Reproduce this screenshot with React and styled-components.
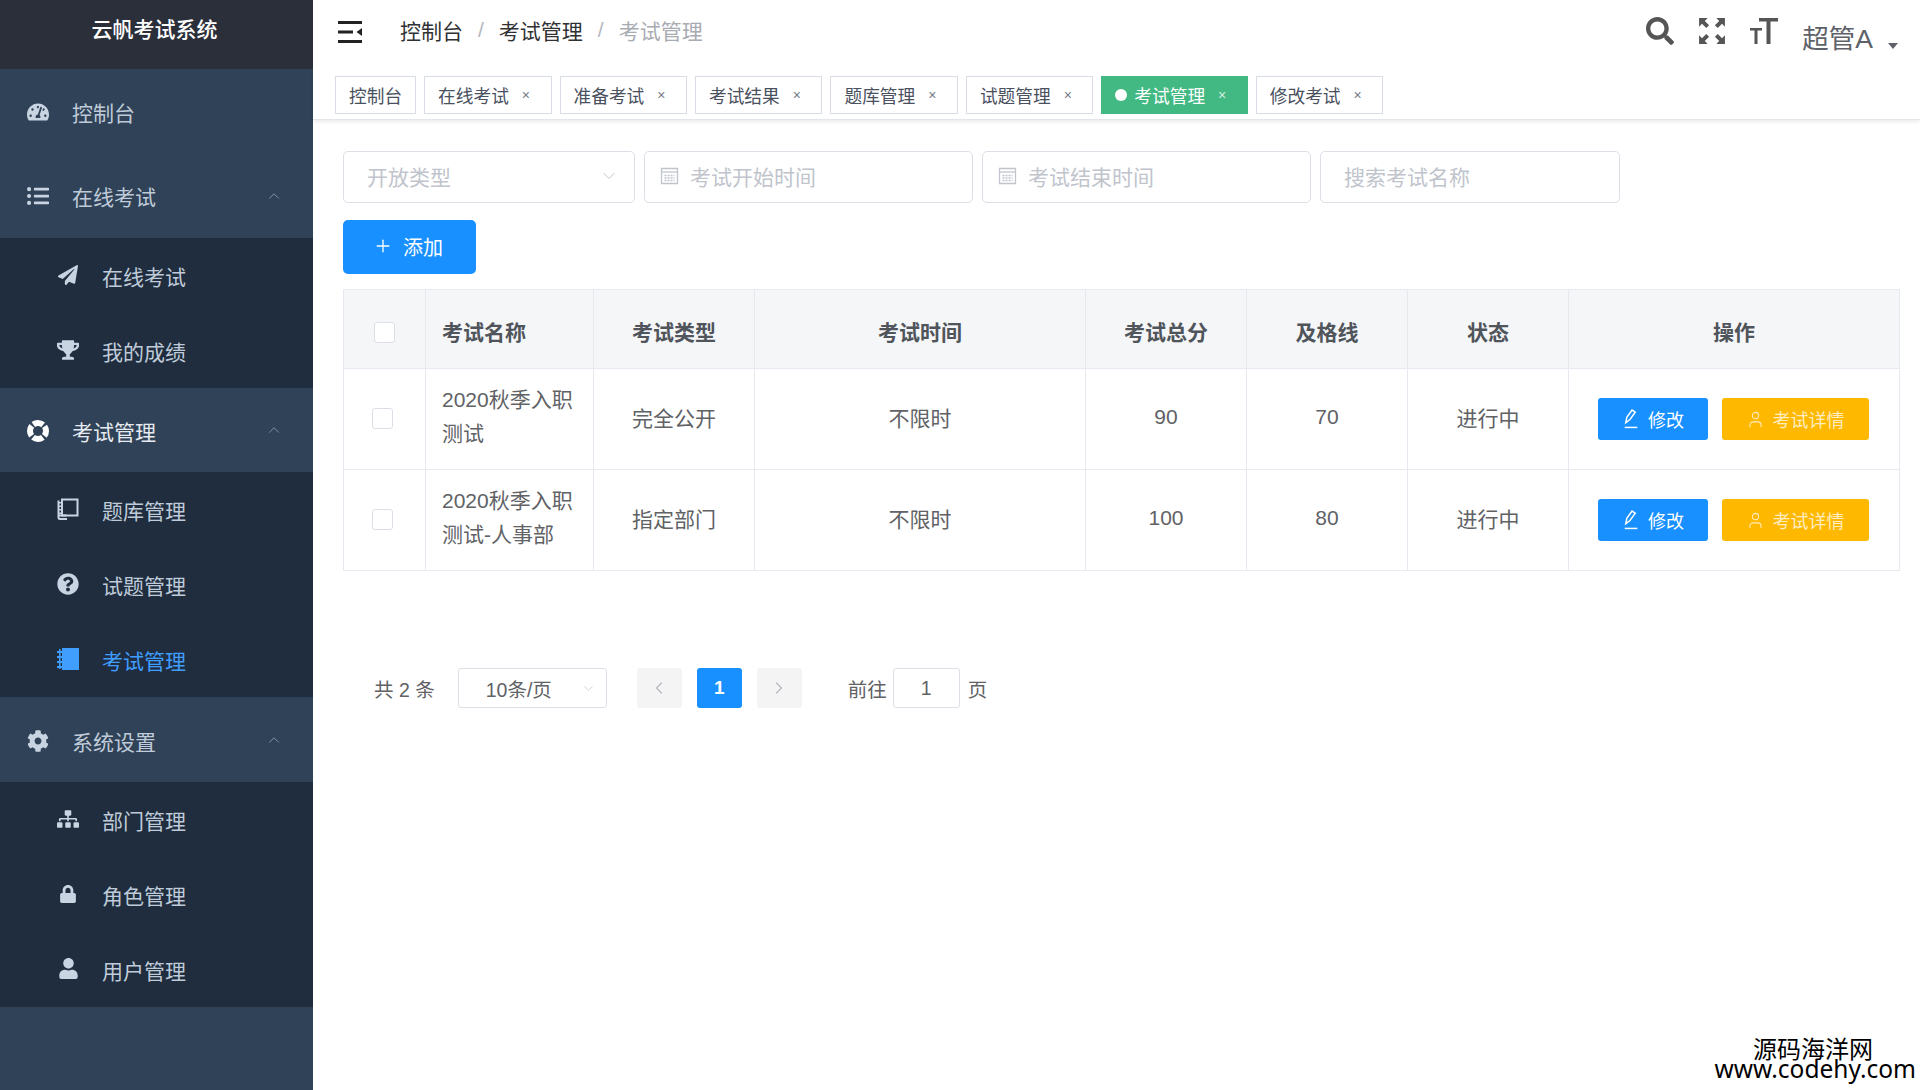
import React from "react";
import styled, { createGlobalStyle } from "styled-components";
import {
    FaTachometerAlt, FaListUl, FaPaperPlane, FaTrophy, FaQuestionCircle,
    FaCog, FaSitemap, FaLock, FaUser, FaSearch
} from "react-icons/fa";
import { ChevronUp, ChevronDown, ChevronLeft, ChevronRight, Plus, User } from "lucide-react";

const GlobalStyle = createGlobalStyle`
    html, body {
        margin: 0;
        padding: 0;
        height: 1090px;
        overflow: hidden;
        background: #fff;
        font-family: "Liberation Sans", "Noto Sans CJK SC", sans-serif;
        color: #606266;
    }
    * {
        box-sizing: border-box;
    }
`;

const Page = styled.div`
    position: relative;
    display: flex;
    width: 1920px;
    height: 1090px;
    overflow: hidden;
`;

/* sidebar */
const Sidebar = styled.aside`
    flex: 0 0 313px;
    height: 100%;
    background: #304257;
`;

const Logo = styled.div`
    display: flex;
    align-items: center;
    justify-content: center;
    height: 68.5px;
    padding: 0 4px 13px 0;
    background: #2b2f3a;
    color: #fff;
    font-size: 21px;
    font-weight: 500;
`;

const RootItem = styled.div`
    display: flex;
    align-items: center;
    height: 84.6px;
    padding: 2px 30px 0 27px;
    color: ${props => (props.$open ? "#e6ebf1" : "#bfcbd9")};
    font-size: 21px;

    .icon {
        display: flex;
        justify-content: center;
        width: 22px;
        margin-right: 23px;
        color: ${props => (props.$open ? "#fff" : "#c9d4e2")};
    }

    .arrow {
        margin-left: auto;
        margin-top: -1px;
        color: #8c99a9;
    }
`;

const SubList = styled.div`
    background: #1f2d3f;
`;

const SubItem = styled.div`
    display: flex;
    align-items: center;
    height: 75px;
    padding: 1px 0 0 57px;
    color: ${props => (props.$active ? "#409eff" : "#bfcbd9")};
    font-size: 21px;

    .icon {
        display: flex;
        justify-content: center;
        width: 22px;
        margin-right: 23px;
        margin-top: -2px;
        color: ${props => (props.$active ? "#409eff" : "#c9d4e2")};
    }
`;

/* main */
const Main = styled.main`
    flex: 1;
    min-width: 0;
    display: flex;
    flex-direction: column;
`;

const Navbar = styled.header`
    display: flex;
    align-items: center;
    height: 70px;
    padding: 0 22px 6px 25px;
    flex: none;
`;

const Breadcrumb = styled.nav`
    display: flex;
    align-items: center;
    margin-left: 37px;
    margin-top: -4px;
    font-size: 21px;
    color: #303133;

    .sep {
        margin: 0 15px;
        color: #b4b8bf;
    }

    .last {
        color: #a8abb2;
    }
`;

const NavTools = styled.div`
    display: flex;
    align-items: center;
    margin-left: auto;
    color: #555;
`;

const ToolIcon = styled.span`
    display: flex;
    margin-right: 24px;
    margin-top: -2px;
`;

const UserName = styled.span`
    display: flex;
    align-items: center;
    margin-top: 14px;
    font-size: 26.500px;
    line-height: 1;
    color: #5e6268;
`;

const Caret = styled.span`
    margin-left: 15px;
    margin-top: 28px;
    border-top: 6px solid #5e6268;
    border-left: 5.500px solid transparent;
    border-right: 5.500px solid transparent;
`;

const TagBar = styled.div`
    display: flex;
    align-items: center;
    gap: 8px;
    flex: none;
    height: 50px;
    padding-left: 22px;
    border-bottom: 1px solid #e2e5ea;
    box-shadow: 0 2px 4px rgba(0, 0, 0, 0.08);
`;

const Tag = styled.div`
    display: flex;
    align-items: center;
    height: 38px;
    padding: 0 ${props => (props.$closable ? "20.500px" : "13px")} 0 13px;
    border: 1px solid ${props => (props.$active ? "#42b983" : "#d8dce5")};
    background: ${props => (props.$active ? "#42b983" : "#fff")};
    color: ${props => (props.$active ? "#fff" : "#495060")};
    font-size: 17.700px;

    .dot {
        width: 12px;
        height: 12px;
        margin-right: 7px;
        border-radius: 50%;
        background: #fff;
    }

    .close {
        margin-left: 13px;
        font-size: 14px;
        line-height: 1;
        opacity: 0.75;
    }
`;

const Content = styled.section`
    flex: 1;
    padding: 31px 20px 0 30px;
`;

const Filters = styled.div`
    display: flex;
    gap: 9px;
    margin-bottom: 17px;
`;

const Field = styled.div`
    display: flex;
    align-items: center;
    width: ${props => props.$width}px;
    height: 52px;
    padding: 0 ${props => (props.$date ? "15px" : "23px")} 2px;
    border: 1px solid #dcdfe6;
    border-radius: 5px;
    background: #fff;
    color: #c0c4cc;
    font-size: 21px;

    .date {
        margin-right: 11px;
        flex: none;
    }

    .chevron {
        margin-left: auto;
        margin-right: -8px;
    }
`;

const AddButton = styled.button`
    display: flex;
    align-items: center;
    gap: 10px;
    width: 133px;
    height: 54px;
    padding: 0 0 2px 30px;
    border: 0;
    border-radius: 5px;
    background: #1890ff;
    color: #fff;
    font-family: inherit;
    font-size: 20px;
`;

const Table = styled.table`
    width: 1556px;
    margin-top: 15px;
    border-collapse: collapse;
    table-layout: fixed;
    font-size: 21px;
    color: #606266;

    th, td {
        border: 1px solid #e6e9ef;
        padding: 0 16px;
        text-align: center;
    }

    th {
        height: 79px;
        padding-top: 4px;
        background: #f4f6f8;
        color: #50545b;
        font-weight: 700;
    }

    td {
        height: 101px;
        padding-bottom: 4px;
    }

    .left {
        text-align: left;
    }

    .name {
        line-height: 34px;
    }
`;

const Check = styled.span`
    display: inline-block;
    vertical-align: middle;
    width: 21px;
    height: 21px;
    border: 1px solid #dcdfe6;
    border-radius: 3px;
    background: #fff;
    margin-right: ${props => (props.$body ? "5px" : "0")};
`;

const Actions = styled.div`
    display: flex;
    justify-content: center;
    gap: 14px;
    margin-top: 4px;
    padding-right: 2px;
`;

const ActionButton = styled.button`
    display: flex;
    align-items: center;
    justify-content: center;
    gap: 8px;
    width: ${props => props.$width}px;
    height: 42px;
    padding: 0;
    border: 0;
    border-radius: 3px;
    background: ${props => props.$color};
    color: ${props => props.$text || "#fff"};
    font-family: inherit;
    font-size: 18px;
`;

const Pagination = styled.div`
    display: flex;
    align-items: center;
    height: 40px;
    margin-top: 97px;
    padding-left: 31px;
    font-size: 19.500px;
    color: #606266;
`;

const PageSelect = styled.div`
    display: flex;
    align-items: center;
    width: 149px;
    height: 40px;
    margin-left: 23px;
    padding: 0 10px 0 27px;
    border: 1px solid #dcdfe6;
    border-radius: 3px;

    .chevron {
        margin-left: auto;
        color: #c0c4cc;
    }
`;

const PageButton = styled.div`
    display: flex;
    align-items: center;
    justify-content: center;
    width: 45px;
    height: 40px;
    margin-left: ${props => props.$gap}px;
    border-radius: 3px;
    background: ${props => (props.$active ? "#1890ff" : "#f4f4f5")};
    color: ${props => (props.$active ? "#fff" : "#b4b8bf")};
    font-size: 19px;
    font-weight: 700;
`;

const JumpLabel = styled.span`
    margin-left: 46px;
`;

const JumpInput = styled.div`
    display: flex;
    align-items: center;
    justify-content: center;
    width: 67px;
    height: 40px;
    margin: 0 8px 0 6px;
    border: 1px solid #dcdfe6;
    border-radius: 3px;
`;

const Watermark = styled.div`
    position: absolute;
    right: 4px;
    bottom: 11px;
    background: #fff;
    color: #000;
    text-align: right;

    .cn {
        display: block;
        margin: 0 43px 1px 0;
        font-family: "Noto Sans CJK SC", sans-serif;
        font-size: 24px;
        line-height: 20px;
    }

    .en {
        display: block;
        font-family: "Noto Sans", sans-serif;
        font-size: 24.500px;
        line-height: 20px;
    }
`;

/* icons with no exact match in the packages */
const LifeRing = () => <svg width="22" height="22" viewBox="0 0 22 22" fill="none" stroke="#fff" strokeWidth="6">
    <circle cx="11" cy="11" r="8" strokeDasharray="10.5 2.07" strokeDashoffset="5.25" />
</svg>;

const BookOutline = () => <svg width="22" height="22" viewBox="0 0 22 22" fill="none" stroke="currentColor" strokeWidth="2">
    <path d="M5 1.5h15.5v16H5z" />
    <path d="M1.5 2.5v17c0 1 .6 1.5 1.5 1.5h7" />
    <path d="M1.5 17.5h8" />
    <path d="M3 4v12" strokeDasharray="1.5 2" />
</svg>;

const NoteBook = () => <svg width="22" height="22" viewBox="0 0 22 22" fill="currentColor">
    <path d="M5 0h17v22H5z" />
    <path d="M0 3h6v2H0zM0 8h6v2H0zM0 13h6v2H0zM0 18h6v2H0z" />
    <path d="M2 1h1.6v20H2z" />
</svg>;

const Hamburger = () => <svg width="25" height="22" viewBox="0 0 25 22" fill="#222">
    <rect x="0" y="0" width="24" height="3" />
    <rect x="0" y="9.5" width="15" height="3" />
    <rect x="0" y="19" width="24" height="3" />
    <path d="M24 7v8L18.500 11z" />
</svg>;

const Fullscreen = () => <svg width="28" height="28" viewBox="1 1 26 26" fill="#555">
    <path d="M2 2h8L7.300 4.700l4 4-2.600 2.600-4-4L2 10z" />
    <path d="M26 2h-8l2.700 2.700-4 4 2.600 2.600 4-4L26 10z" />
    <path d="M2 26h8l-2.700-2.700 4-4-2.600-2.600-4 4L2 18z" />
    <path d="M26 26h-8l2.700-2.700-4-4 2.600-2.600 4 4L26 18z" />
</svg>;

const SizeIcon = () => <svg width="28" height="28" viewBox="0 0 28 28" fill="#555">
    <path d="M9 1h19v3.500h-7.500V27H16.500V4.500H9z" />
    <path d="M0 11h12v2.500H7.500V27H4.500V13.500H0z" />
</svg>;

const DateIcon = () => <svg className="date" width="19" height="18" viewBox="0 0 18 18" fill="none" stroke="#c0c4cc" strokeWidth="1.300">
    <path d="M1 1.500h16v15H1z" />
    <path d="M1 5h16" />
    <path d="M4 8.500h10M4 11h10M4 13.500h10" strokeDasharray="2 1" />
</svg>;

const EditIcon = () => <svg width="19" height="20" viewBox="0 0 17 19" fill="none" stroke="currentColor" strokeWidth="1.400">
    <path d="M4 13l1-5 5-7 3 2-5 7z" />
    <path d="M3 17.500h12" />
</svg>;

const menus = [
    { title: "控制台", icon: <FaTachometerAlt size={22} /> },
    {
        title: "在线考试", icon: <FaListUl size={22} />, children: [
            { title: "在线考试", icon: <FaPaperPlane size={20} /> },
            { title: "我的成绩", icon: <FaTrophy size={22} /> }
        ]
    },
    {
        title: "考试管理", icon: <LifeRing />, open: true, children: [
            { title: "题库管理", icon: <BookOutline /> },
            { title: "试题管理", icon: <FaQuestionCircle size={22} /> },
            { title: "考试管理", icon: <NoteBook />, active: true }
        ]
    },
    {
        title: "系统设置", icon: <FaCog size={22} />, children: [
            { title: "部门管理", icon: <FaSitemap size={22} /> },
            { title: "角色管理", icon: <FaLock size={18} /> },
            { title: "用户管理", icon: <FaUser size={21} /> }
        ]
    }
];

const tags = [
    { title: "控制台" },
    { title: "在线考试", closable: true },
    { title: "准备考试", closable: true },
    { title: "考试结果", closable: true },
    { title: "题库管理", closable: true },
    { title: "试题管理", closable: true },
    { title: "考试管理", closable: true, active: true },
    { title: "修改考试", closable: true }
];

const exams = [
    { name: ["2020秋季入职", "测试"], type: "完全公开", time: "不限时", total: 90, pass: 70, state: "进行中" },
    { name: ["2020秋季入职", "测试-人事部"], type: "指定部门", time: "不限时", total: 100, pass: 80, state: "进行中" }
];

const columnWidths = [82, 168, 161, 331, 161, 161, 161, 331];

const App = function App() {
    return <Page>
        <GlobalStyle />
        <Sidebar>
            <Logo>云帆考试系统</Logo>
            {menus.map(menu => <div key={menu.title}>
                <RootItem $open={menu.open}>
                    <span className="icon">{menu.icon}</span>
                    {menu.title}
                    {menu.children ? <ChevronUp className="arrow" size={18} strokeWidth={1.2} /> : null}
                </RootItem>
                {menu.children ? <SubList>
                    {menu.children.map(item => <SubItem key={item.title} $active={item.active}>
                        <span className="icon">{item.icon}</span>
                        {item.title}
                    </SubItem>)}
                </SubList> : null}
            </div>)}
        </Sidebar>
        <Main>
            <Navbar>
                <Hamburger />
                <Breadcrumb>
                    <span>控制台</span>
                    <span className="sep">/</span>
                    <span>考试管理</span>
                    <span className="sep">/</span>
                    <span className="last">考试管理</span>
                </Breadcrumb>
                <NavTools>
                    <ToolIcon><FaSearch size={28} /></ToolIcon>
                    <ToolIcon><Fullscreen /></ToolIcon>
                    <ToolIcon><SizeIcon /></ToolIcon>
                    <UserName>超管A</UserName>
                    <Caret />
                </NavTools>
            </Navbar>
            <TagBar>
                {tags.map(tag => <Tag key={tag.title} $closable={tag.closable} $active={tag.active}>
                    {tag.active ? <span className="dot" /> : null}
                    {tag.title}
                    {tag.closable ? <span className="close">×</span> : null}
                </Tag>)}
            </TagBar>
            <Content>
                <Filters>
                    <Field $width={292}>
                        开放类型
                        <ChevronDown className="chevron" size={20} strokeWidth={1.2} />
                    </Field>
                    <Field $width={329} $date><DateIcon />考试开始时间</Field>
                    <Field $width={329} $date><DateIcon />考试结束时间</Field>
                    <Field $width={300}>搜索考试名称</Field>
                </Filters>
                <AddButton><Plus size={20} strokeWidth={1.6} />添加</AddButton>
                <Table>
                    <colgroup>
                        {columnWidths.map((width, index) => <col key={index} width={width} />)}
                    </colgroup>
                    <thead>
                        <tr>
                            <th><Check /></th>
                            <th className="left">考试名称</th>
                            <th>考试类型</th>
                            <th>考试时间</th>
                            <th>考试总分</th>
                            <th>及格线</th>
                            <th>状态</th>
                            <th>操作</th>
                        </tr>
                    </thead>
                    <tbody>
                        {exams.map(exam => <tr key={exam.total}>
                            <td><Check $body /></td>
                            <td className="left name">{exam.name[0]}<br />{exam.name[1]}</td>
                            <td>{exam.type}</td>
                            <td>{exam.time}</td>
                            <td>{exam.total}</td>
                            <td>{exam.pass}</td>
                            <td>{exam.state}</td>
                            <td>
                                <Actions>
                                    <ActionButton $width={110} $color="#1890ff"><EditIcon />修改</ActionButton>
                                    <ActionButton $width={147} $color="#ffb800" $text="#ffedc0"><User size={19} strokeWidth={1.3} />考试详情</ActionButton>
                                </Actions>
                            </td>
                        </tr>)}
                    </tbody>
                </Table>
                <Pagination>
                    <span>共 2 条</span>
                    <PageSelect>
                        10条/页
                        <ChevronDown className="chevron" size={15} strokeWidth={1.2} />
                    </PageSelect>
                    <PageButton $gap={30}><ChevronLeft size={20} strokeWidth={1.5} /></PageButton>
                    <PageButton $gap={15} $active>1</PageButton>
                    <PageButton $gap={15}><ChevronRight size={20} strokeWidth={1.5} /></PageButton>
                    <JumpLabel>前往</JumpLabel>
                    <JumpInput>1</JumpInput>
                    <span>页</span>
                </Pagination>
            </Content>
        </Main>
        <Watermark>
            <span className="cn">源码海洋网</span>
            <span className="en">www.codehy.com</span>
        </Watermark>
    </Page>;
};

export default App;
